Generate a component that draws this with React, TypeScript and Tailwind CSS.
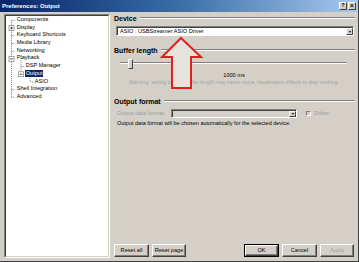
import React from 'react'

type Node = {
  label: string
  level: number
  box?: '+' | '-'
  selected?: boolean
}

const tree: Node[] = [
  { label: 'Components', level: 0 },
  { label: 'Display', level: 0, box: '+' },
  { label: 'Keyboard Shortcuts', level: 0 },
  { label: 'Media Library', level: 0 },
  { label: 'Networking', level: 0 },
  { label: 'Playback', level: 0, box: '-' },
  { label: 'DSP Manager', level: 1 },
  { label: 'Output', level: 1, box: '-', selected: true },
  { label: 'ASIO', level: 2 },
  { label: 'Shell Integration', level: 0 },
  { label: 'Advanced', level: 0 },
]

const ROW = 7.7
const cy = (i: number) => ROW / 2 + ROW * i
const lineX = [5.5, 15, 24]

function TreeLines() {
  return (
    <svg className="absolute inset-0 pointer-events-none" width="104" height="242">
      <g stroke="#808080" strokeWidth="1" strokeDasharray="1 1" fill="none">
        <line x1={lineX[0]} y1={cy(0)} x2={lineX[0]} y2={cy(10)} />
        <line x1={lineX[1]} y1={cy(5)} x2={lineX[1]} y2={cy(7)} />
        <line x1={lineX[2]} y1={cy(7)} x2={lineX[2]} y2={cy(8)} />
        {tree.map((n, i) => (
          <line key={i} x1={lineX[n.level]} y1={cy(i) + 0.5} x2={lineX[n.level] + 4} y2={cy(i) + 0.5} />
        ))}
      </g>
      {tree.map((n, i) =>
        n.box ? (
          <g key={'b' + i}>
            <rect x={lineX[n.level] - 2.5} y={cy(i) - 2} width="5" height="5" fill="#fff" stroke="#909090" strokeWidth="0.8" />
            <line x1={lineX[n.level] - 1.3} y1={cy(i) + 0.5} x2={lineX[n.level] + 1.3} y2={cy(i) + 0.5} stroke="#000" strokeWidth="0.7" />
            {n.box === '+' && (
              <line x1={lineX[n.level]} y1={cy(i) - 0.8} x2={lineX[n.level]} y2={cy(i) + 1.8} stroke="#000" strokeWidth="0.7" />
            )}
          </g>
        ) : null
      )}
    </svg>
  )
}

function Btn({ label, w, disabled, def }: { label: string; w: string; disabled?: boolean; def?: boolean }) {
  return (
    <div className={`${w} h-[13px] ${def ? 'border border-black' : ''}`}>
      <div className="h-full w-full flex items-center justify-center bg-[#d4d0c8] border-t border-l border-t-white border-l-white border-b border-r border-b-[#404040] border-r-[#404040] shadow-[inset_-1px_-1px_0_#808080]">
        <span className={`text-[5.6px] leading-none ${disabled ? 'text-[#a0a0a0]' : 'text-black'}`}>{label}</span>
      </div>
    </div>
  )
}

function Heading({ text }: { text: string }) {
  return (
    <div className="h-[8px] flex items-center gap-[3px] pl-[2px] pr-[1px]">
      <span className="text-[7px] font-bold leading-none text-black">{text}</span>
      <div className="flex-1 h-[2px] border-t border-t-[#808080] border-b border-b-white" />
    </div>
  )
}

function DropArrow() {
  return (
    <div className="w-[7px] h-full flex items-center justify-center bg-[#d4d0c8] border-t border-l border-t-white border-l-white border-b border-r border-b-[#404040] border-r-[#404040]">
      <div className="w-0 h-0 border-l-[1.5px] border-r-[1.5px] border-t-[2px] border-l-transparent border-r-transparent border-t-black" />
    </div>
  )
}

export default function App() {
  return (
    <div className="relative w-[359px] h-[262px] overflow-hidden bg-[#d4d0c8] flex flex-col border-r border-b border-r-[#404040] border-b-[#404040] font-['Liberation_Sans',Arial,sans-serif]">
      {/* title bar */}
      <div className="h-[12px] shrink-0 flex items-center pl-[2px] pr-[2px] bg-gradient-to-r from-[#0a246a] via-[#3a6ea5] to-[#a6caf0]">
        <span className="text-[6px] font-bold text-white leading-none">Preferences: Output</span>
        <div className="ml-auto flex gap-[1px]">
          <div className="w-[8px] h-[8px] flex items-center justify-center bg-[#d4d0c8] border-t border-l border-t-white border-l-white border-b border-r border-b-[#404040] border-r-[#404040]">
            <span className="text-[5.5px] font-bold leading-none">?</span>
          </div>
          <div className="w-[8px] h-[8px] flex items-center justify-center bg-[#d4d0c8] border-t border-l border-t-white border-l-white border-b border-r border-b-[#404040] border-r-[#404040]">
            <span className="text-[6.5px] font-bold leading-none">×</span>
          </div>
        </div>
      </div>

      <div className="flex-1 flex pt-[2px] pl-[4px] pr-[2px] pb-[3px] gap-[2px]">
        {/* tree */}
        <div className="w-[106px] h-full border-t border-l border-t-[#808080] border-l-[#808080] border-b border-r border-b-white border-r-white">
          <div className="relative h-full bg-white border-t border-l border-t-[#404040] border-l-[#404040] border-b border-r border-b-[#d4d0c8] border-r-[#d4d0c8]">
            <TreeLines />
            <div className="relative flex flex-col">
              {tree.map((n) => (
                <div
                  key={n.label}
                  className={`h-[7.7px] flex items-center ${n.level === 0 ? 'pl-[10.2px]' : n.level === 1 ? 'pl-[19.2px]' : 'pl-[28.2px]'}`}
                >
                  <span
                    className={`text-[5.6px] leading-none px-[0.5px] py-[1px] ${n.selected ? 'bg-[#0a246a] text-white' : 'text-black'}`}
                  >
                    {n.label}
                  </span>
                </div>
              ))}
            </div>
          </div>
        </div>

        {/* page */}
        <div className="flex-1 flex flex-col">
          <Heading text="Device" />
          <div className="mt-[4px] ml-[4px] mr-[2px] h-[10px] border-t border-l border-t-[#808080] border-l-[#808080] border-b border-r border-b-white border-r-white">
            <div className="h-full flex items-center bg-white border-t border-l border-t-[#404040] border-l-[#404040] pl-[2px]">
              <span className="flex-1 text-[5.6px] leading-none text-black">ASIO : USBStreamer ASIO Driver</span>
              <DropArrow />
            </div>
          </div>

          <div className="mt-[10px]">
            <Heading text="Buffer length" />
          </div>
          <div className="relative mt-[4px] h-[12px] ml-[8px] mr-[9px]">
            <div className="absolute left-0 right-0 top-[4px] h-[2px] border-t border-t-[#808080] border-b border-b-white" />
            <div className="absolute left-[8px] top-[1px] w-[5px] h-[10px] bg-[#d4d0c8] border-t border-l border-t-white border-l-white border-b border-r border-b-[#404040] border-r-[#404040]" />
          </div>
          <div className="mt-[2px] h-[7px] flex items-center justify-center">
            <span className="text-[5.6px] leading-none text-black">1000 ms</span>
          </div>
          <div className="h-[7px] flex items-center justify-center">
            <span className="text-[5.2px] leading-none text-[#a3a3a3]">
              Warning: setting too low buffer length may cause some visualization effects to stop working.
            </span>
          </div>

          <div className="mt-[11px]">
            <Heading text="Output format" />
          </div>
          <div className="mt-[4px] h-[9px] flex items-center ml-[5px]">
            <span className="w-[54px] text-[5.6px] leading-none text-[#9a9a9a]">Output data format:</span>
            <div className="w-[126px] h-full border-t border-l border-t-[#808080] border-l-[#808080] border-b border-r border-b-white border-r-white">
              <div className="h-full flex justify-end bg-[#d4d0c8] border-t border-l border-t-[#404040] border-l-[#404040]">
                <DropArrow />
              </div>
            </div>
            <div className="ml-[9px] w-[5px] h-[5px] bg-[#d4d0c8] border-t border-l border-t-[#808080] border-l-[#808080] border-b border-r border-b-white border-r-white" />
            <span className="ml-[3px] text-[5.6px] leading-none text-[#9a9a9a]">Dither</span>
          </div>
          <div className="mt-[2px] h-[8px] flex items-center ml-[5px]">
            <span className="text-[5.5px] leading-none text-black">
              Output data format will be chosen automatically for the selected device.
            </span>
          </div>

          <div className="flex-1" />

          <div className="flex mb-[1px] mr-[2px] ml-[2px]">
            <Btn label="Reset all" w="w-[35px]" />
            <div className="ml-[3px]">
              <Btn label="Reset page" w="w-[34px]" />
            </div>
            <div className="ml-auto">
              <Btn label="OK" w="w-[35px]" def />
            </div>
            <div className="ml-[3px]">
              <Btn label="Cancel" w="w-[35px]" />
            </div>
            <div className="ml-[3px]">
              <Btn label="Apply" w="w-[34px]" disabled />
            </div>
          </div>
        </div>
      </div>

      {/* red arrow drawn over the dialog */}
      <svg className="absolute left-0 top-0 pointer-events-none" width="359" height="262">
        <polygon
          points="181,38 201,57 191,57 191,88 172,88 172,57 162,57"
          fill="#e6e2dc"
          stroke="#e0201c"
          strokeWidth="2"
          strokeLinejoin="miter"
        />
      </svg>
    </div>
  )
}
